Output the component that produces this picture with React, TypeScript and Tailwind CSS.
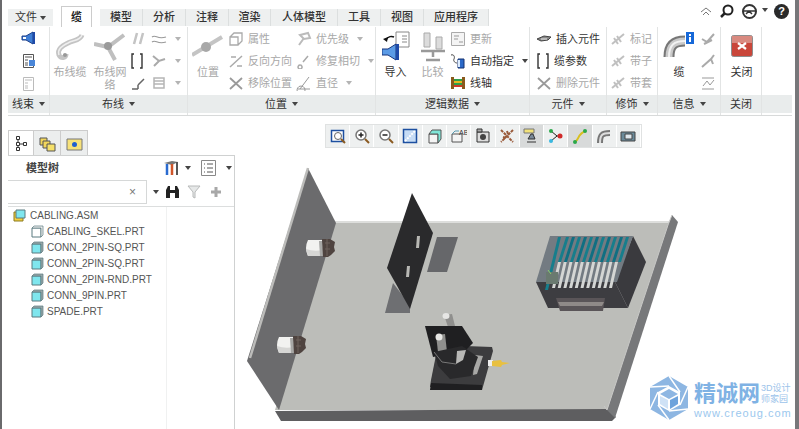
import React from "react";

type P = { className?: string };

const Svg = ({ s = 16, children }: { s?: number; children: React.ReactNode }) => (
  <svg width={s} height={s} viewBox={`0 0 ${s} ${s}`} className="block shrink-0">
    {children}
  </svg>
);

const Caret = ({ className = "" }: P) => <span className={`inline-block w-0 h-0 border-x-[3px] border-x-transparent border-t-[4px] border-t-[#444] ${className}`} />;

// ribbon icons
const Speaker = () => (
  <Svg>
    <path d="M1 6h4l7-4v12l-7-4H1z" fill="#3f7fd6" stroke="#1c3f8a" />
    <path d="M12 2h2v12h-2z" fill="#1f4aa8" />
    <path d="M2 7h3v2H2z" fill="#fff" />
  </Svg>
);
const Sheet = ({ on = true }: { on?: boolean }) => (
  <Svg>
    <path d="M2.500 1.500h10v13h-10z" fill="#fff" stroke={on ? "#555" : "#bbb"} />
    <path d="M4 4h7M4 7h3M4 10h3M4 12h3" stroke={on ? "#555" : "#bbb"} />
    {on && <path d="M8 7h6v6H8z" fill="#4a86d8" />}
  </Svg>
);
const Grey = ({ d, w = 1.5, c = "#b5b5b5" }: { d: string; w?: number; c?: string }) => (
  <Svg>
    <path d={d} fill="none" stroke={c} strokeWidth={w} />
  </Svg>
);
const Cable = () => (
  <svg width="32" height="28" viewBox="0 0 32 28" className="block">
    <path d="M28 2c-2 6-9 5-14 8-6 3-11 6-9 12 2 4 7 3 7-1" fill="none" stroke="#c4c4c4" strokeWidth="5" />
    <path d="M28 2c-2 6-9 5-14 8-6 3-11 6-9 12" fill="none" stroke="#eee" strokeWidth="1.500" />
    <circle cx="11" cy="22" r="2" fill="#999" />
  </svg>
);
const Net = () => (
  <svg width="32" height="28" viewBox="0 0 32 28" className="block">
    <path d="M0 11l14 3 16-12M14 14l7 13" fill="none" stroke="#bfbfbf" strokeWidth="4" />
    <circle cx="14" cy="13" r="4" fill="#9a9a9a" />
  </svg>
);
const Pos = () => (
  <svg width="32" height="24" viewBox="0 0 32 24" className="block">
    <path d="M0 20L30 2" stroke="#c4c4c4" strokeWidth="4" />
    <circle cx="14" cy="12" r="5" fill="#a8a8a8" />
  </svg>
);
const Import = () => (
  <svg width="28" height="32" viewBox="0 0 28 32" className="block">
    <path d="M14 1h13v15H14z" fill="#fff" stroke="#888" />
    <path d="M20 5h5M20 8h5M20 11h5" stroke="#888" />
    <path d="M4 9c2-4 6-4 8-3" fill="none" stroke="#111" strokeWidth="1.500" />
    <path d="M1 8l5-2-1 5z" fill="#111" />
    <path d="M0 18h6l8-5v16l-8-5H0z" fill="#5b9be6" stroke="#17357c" />
    <path d="M14 13h3v16h-3z" fill="#1f4aa8" />
  </svg>
);
const Compare = () => (
  <svg width="28" height="32" viewBox="0 0 28 32" className="block">
    <path d="M5 2h6v14H5zM17 6h6v12h-6z" fill="#dcdcdc" stroke="#aaa" />
    <path d="M2 20h24M14 20v6M7 29h14" stroke="#999" strokeWidth="2.500" />
  </svg>
);
const Update = () => (
  <Svg>
    <path d="M1.500 1.500h13v13h-13z" fill="#f4f4f4" stroke="#aaa" />
    <path d="M4 5h5M4 8h4M9 11h4" stroke="#999" />
  </Svg>
);
const Auto = () => (
  <Svg>
    <path d="M1 2c3-1 4 2 3 4s1 4 3 4" fill="none" stroke="#444" />
    <path d="M8 6h6v9H8z" fill="#2b69c8" stroke="#14306f" />
    <path d="M8 7h2v7H8z" fill="#dcecff" />
  </Svg>
);
const Spool = () => (
  <Svg>
    <path d="M1 2h3v12H1zM12 2h3v12h-3z" fill="#8a5a1c" />
    <path d="M4 4h8v2H4z" fill="#2ea04a" />
    <path d="M4 6h8v2H4z" fill="#e6b820" />
    <path d="M4 8h8v2H4z" fill="#2ea04a" />
    <path d="M4 10h8v2H4z" fill="#d03a2a" />
  </Svg>
);
const Insert = () => (
  <Svg>
    <path d="M1 8l7-3 7 1-3 3-7 1z" fill="#888" stroke="#444" />
    <path d="M5 8h6" stroke="#eee" />
  </Svg>
);
const Brackets = () => (
  <svg width="14" height="16" viewBox="0 0 14 16" className="block">
    <path d="M4 1H2v14h2M10 1h2v14h-2" fill="none" stroke="#333" strokeWidth="1.400" />
  </svg>
);
const Cross = () => <Grey d="M2 3l12 11M14 3L2 14" w={1.800} c="#9a9a9a" />;
const Clamp = () => <Grey d="M2 13L14 3M4 7l4 6M7 5l4 6" w={2} c="#c0c0c0" />;
const Elbow = () => (
  <svg width="32" height="32" viewBox="0 0 32 32" className="block">
    <path d="M6 26c0-12 5-16 16-16" fill="none" stroke="#777" strokeWidth="11" />
    <path d="M6 26c0-12 5-16 16-16" fill="none" stroke="#c9c9c9" strokeWidth="7" />
    <path d="M6 26c0-12 5-16 16-16" fill="none" stroke="#f2f2f2" strokeWidth="2" />
    <path d="M23 1h8v12h-8z" fill="#1668d8" />
    <path d="M26 3h2v2h-2zM26 6h2v5h-2z" fill="#fff" />
  </svg>
);
const CloseX = () => (
  <svg width="22" height="22" viewBox="0 0 22 22" className="block mb-[3px]">
    <rect x=".5" y=".5" width="21" height="21" rx="2" fill="#c9463a" stroke="#8e8e8e" />
    <path d="M1 1h20v7H1z" fill="#d98a80" />
    <path d="M7 8l8 6M15 8l-8 6" stroke="#fff" strokeWidth="2.200" />
  </svg>
);

const Group = ({ w, label, caret = true, children }: { w: string; label: string; caret?: boolean; children: React.ReactNode }) => (
  <div className={`${w} shrink-0 flex flex-col border-r border-[#e2e4e4]`}>
    <div className="h-[68px] flex">{children}</div>
    <div className="h-[18px] bg-[#e9ecec] flex items-center justify-center gap-[5px] text-[11px] text-[#333]">
      {label}
      {caret && <Caret />}
    </div>
  </div>
);

const Big = ({ w, icon, label, off }: { w: string; icon: React.ReactNode; label: React.ReactNode; off?: boolean }) => (
  <div className={`${w} shrink-0 flex flex-col items-center pt-[2px]`}>
    <div className="h-[36px] flex items-center justify-center">{icon}</div>
    <div className={`text-[11px] leading-[13px] text-center mt-[1px] ${off ? "text-[#a8a8a8]" : "text-[#333]"}`}>{label}</div>
  </div>
);

const Col = ({ w, children }: { w: string; children: React.ReactNode }) => <div className={`${w} shrink-0 flex flex-col justify-between pt-[3px] pb-[3px]`}>{children}</div>;

const Row = ({ icon, text, off, caret }: { icon: React.ReactNode; text?: string; off?: boolean; caret?: boolean }) => (
  <div className={`h-[18px] flex items-center gap-[4px] text-[11px] whitespace-nowrap ${off ? "text-[#a8a8a8]" : "text-[#333]"}`}>
    {icon}
    {text}
    {caret && <Caret className={`ml-[4px] ${off ? "opacity-40" : ""}`} />}
  </div>
);

const tabs = [
  { t: "模型", w: "w-[43px]" },
  { t: "分析", w: "w-[43px]" },
  { t: "注释", w: "w-[43px]" },
  { t: "渲染", w: "w-[42px]" },
  { t: "人体模型", w: "w-[67px]" },
  { t: "工具", w: "w-[43px]" },
  { t: "视图", w: "w-[43px]" },
  { t: "应用程序", w: "w-[65px]" },
];

const TopBar = () => (
  <div className="h-[27px] flex items-end pl-[6px]">
    <div className="w-[45px] h-[17px] bg-[#eef0f0] flex items-center justify-center gap-[3px] text-[11px] text-[#333] mb-[1px]">
      文件 <Caret />
    </div>
    <div className="w-[8px] h-[17px] mb-[1px]" />
    <div className="w-[31px] h-[21px] bg-white border border-b-0 border-[#ccc] flex items-center justify-center text-[11px] font-bold text-[#222]">缆</div>
    <div className="w-[8px] h-[17px] mb-[1px]" />
    {tabs.map((x) => (
      <div key={x.t} className={`${x.w} h-[17px] mb-[1px] bg-[#eef0f0] border-r border-[#dcdfdf] flex items-center justify-center text-[11px] font-medium text-[#333]`}>
        {x.t}
      </div>
    ))}
    <div className="ml-auto mr-[6px] mb-[8px] flex items-center gap-[5px]">
      <svg width="12" height="10" viewBox="0 0 12 10" className="block">
        <path d="M1 5l5-4 5 4M3 8l3-3 3 3" fill="none" stroke="#777" />
      </svg>
      <svg width="15" height="15" viewBox="0 0 15 15" className="block ml-[2px]">
        <circle cx="9" cy="6" r="4.500" fill="#fff" stroke="#222" strokeWidth="2" />
        <path d="M6 9l-4 4" stroke="#222" strokeWidth="2.500" />
      </svg>
      <svg width="15" height="15" viewBox="0 0 15 15" className="block ml-[3px]">
        <circle cx="7.500" cy="7.500" r="6.500" fill="#fff" stroke="#333" strokeWidth="2" />
        <path d="M2 7h11M4 10l3-3 3 3" stroke="#333" strokeWidth="1.500" fill="none" />
      </svg>
      <Caret className="mb-[4px]" />
      <div className="ml-[1px] w-[15px] h-[15px] rounded-full bg-[#2a2a2a] text-white text-[11px] font-bold leading-[15px] text-center">?</div>
    </div>
  </div>
);

const Ribbon = () => (
  <div className="h-[89px] ml-[6px] mr-[3px] flex border-b border-[#d8dada] bg-white">
    <Group w="w-[42px]" label="线束">
      <div className="flex-1 flex flex-col items-center justify-between pt-[3px] pb-[3px]">
        <Speaker />
        <Sheet />
        <Sheet on={false} />
      </div>
    </Group>
    <Group w="w-[138px]" label="布线">
      <Big w="w-[40px]" icon={<Cable />} label="布线缆" off />
      <Big w="w-[40px]" icon={<Net />} label={<>布线网<br />络</>} off />
      <Col w="w-[21px]">
        <Row icon={<Grey d="M4 13L7 2M10 13l3-11" w={2.500} c="#c4c4c4" />} />
        <Brackets />
        <Row icon={<Grey d="M2 14h6M8 14V10M14 4l-6 6" w={1.500} c="#666" />} />
      </Col>
      <Col w="w-[30px]">
        <Row icon={<Grey d="M1 6c4-3 5 3 14 0M1 11c4-3 5 3 14 0" w={1.200} c="#999" />} caret off />
        <Row icon={<Grey d="M2 3l6 5 6-2M8 8l-5 5" w={2} c="#aaa" />} caret off />
        <Row icon={<Grey d="M3 3h10v10H3zM3 6h10M3 9h10" w={1.500} c="#b5b5b5" />} caret off />
      </Col>
    </Group>
    <Group w="w-[188px]" label="位置">
      <Big w="w-[40px]" icon={<Pos />} label="位置" off />
      <Col w="w-[68px]">
        <Row icon={<Grey d="M2 6h8v8H2zM2 6l4-4h8v8l-4 4" w={1.300} c="#aaa" />} text="属性" off />
        <Row icon={<Grey d="M2 14L14 3M3 4h5M9 13h5" w={1.500} c="#aaa" />} text="反向方向" off />
        <Row icon={<Cross />} text="移除位置" off />
      </Col>
      <Col w="w-[77px]">
        <Row icon={<Grey d="M3 14L8 7M4 4l8-2 2 5-6 1z" w={2} c="#bbb" />} text="优先级" off caret />
        <Row icon={<Grey d="M4 12a2 2 0 1 0 .1 0M7 9l5-6" w={1.500} c="#aaa" />} text="修复相切" off caret />
        <Row icon={<Grey d="M2 14h12M5 11a4 4 0 1 0 .1 0M4 14L13 2" w={1} c="#999" />} text="直径" off caret />
      </Col>
    </Group>
    <Group w="w-[154px]" label="逻辑数据">
      <Big w="w-[39px]" icon={<Import />} label="导入" />
      <Big w="w-[35px]" icon={<Compare />} label="比较" off />
      <Col w="w-[78px]">
        <Row icon={<Update />} text="更新" off />
        <Row icon={<Auto />} text="自动指定" caret />
        <Row icon={<Spool />} text="线轴" />
      </Col>
    </Group>
    <Group w="w-[77px]" label="元件">
      <Col w="w-[76px] pl-[6px]">
        <Row icon={<Insert />} text="插入元件" />
        <Row icon={<Brackets />} text="缆参数" />
        <Row icon={<Cross />} text="删除元件" off />
      </Col>
    </Group>
    <Group w="w-[51px]" label="修饰">
      <Col w="w-[50px] pl-[3px]">
        <Row icon={<Clamp />} text="标记" off />
        <Row icon={<Clamp />} text="带子" off />
        <Row icon={<Clamp />} text="带套" off />
      </Col>
    </Group>
    <Group w="w-[63px]" label="信息">
      <Big w="w-[42px]" icon={<Elbow />} label="缆" />
      <Col w="w-[20px]">
        <Row icon={<Grey d="M2 8l5 3 7-8M4 13l8-4" w={2} c="#aaa" />} />
        <Row icon={<Grey d="M2 14l9-8 3-4M11 6l2 5" w={2} c="#aaa" />} />
        <Row icon={<Grey d="M2 3h12M2 14h12M3 11l4-5 3 4 4-5" w={1} c="#999" />} />
      </Col>
    </Group>
    <Group w="w-[41px]" label="关闭" caret={false}>
      <Big w="w-[41px]" icon={<CloseX />} label="关闭" />
    </Group>
    <div className="flex-1 flex flex-col">
      <div className="h-[68px]" />
      <div className="h-[18px] bg-[#e9ecec]" />
    </div>
  </div>
);

const Cube = ({ skel }: { skel?: boolean }) => (
  <svg width="13" height="13" viewBox="0 0 13 13" className="block shrink-0">
    <path d="M1 3h9v9H1z" fill={skel ? "#fff" : "#7fe6ee"} stroke="#5a7a80" />
    <path d="M1 3l2-2h9v9l-2 2V3z" fill={skel ? "#eee" : "#9aa8aa"} stroke="#5a7a80" strokeWidth=".7" />
  </svg>
);

const parts = ["CABLING_SKEL.PRT", "CONN_2PIN-SQ.PRT", "CONN_2PIN-SQ.PRT", "CONN_2PIN-RND.PRT", "CONN_9PIN.PRT", "SPADE.PRT"];

const Sidebar = () => (
  <div className="w-[238px] shrink-0 pl-[6px] pr-[5px] pt-[14px] flex flex-col">
    <div className="flex h-[25px]">
      <div className="w-[26px] bg-white border border-b-0 border-[#ccc] flex items-center justify-center">
        <svg width="13" height="17" viewBox="0 0 13 17" className="block">
          <path d="M1.500 1.500h3v3h-3zM1.500 7.500h3v3h-3zM1.500 12.500h3v3h-3zM8.500 7.500h3v3h-3zM3 4.500v3M3 10.500v2M4.500 9h4" fill="none" stroke="#333" />
        </svg>
      </div>
      <div className="w-[27px] bg-[#eceeee] border-t border-r border-[#ccc] flex items-center justify-center">
        <svg width="17" height="17" viewBox="0 0 17 17" className="block">
          <path d="M1 3h7v7H1z" fill="#f2d65a" stroke="#555" />
          <path d="M4 6h7v7H4z" fill="#f2d65a" stroke="#555" />
          <path d="M8 9h8v7H8z" fill="#f5e06a" stroke="#555" />
        </svg>
      </div>
      <div className="w-[27px] bg-[#eceeee] border-t border-r border-[#ccc] flex items-center justify-center">
        <svg width="17" height="15" viewBox="0 0 17 15" className="block">
          <path d="M1 3h15v11H1z" fill="#f7e27a" stroke="#777" />
          <circle cx="8.500" cy="8.500" r="2.500" fill="#1f5fd0" />
        </svg>
      </div>
    </div>
    <div className="flex-1 flex flex-col border-t border-r border-[#cfd1d1]">
      <div className="h-[24px] flex items-center pl-[18px] pr-[2px]">
        <span className="text-[11px] font-bold text-[#444]">模型树</span>
        <div className="ml-auto flex items-center gap-[5px]">
          <svg width="17" height="16" viewBox="0 0 17 16" className="block">
            <path d="M1 3l8-2 6 1-6 3z" fill="#777" />
            <path d="M4 4v11" stroke="#2a6bd0" strokeWidth="2.500" />
            <path d="M9 4v11" stroke="#d0562a" strokeWidth="2.500" />
            <path d="M14 2v13" stroke="#555" strokeWidth="2" />
          </svg>
          <Caret className="mr-[5px]" />
          <svg width="15" height="16" viewBox="0 0 15 16" className="block">
            <path d="M.5.5h14v15H.5z" fill="#fff" stroke="#888" />
            <path d="M3 4h1M6 4h6M3 8h1M6 8h6M3 12h1M6 12h6" stroke="#555" />
          </svg>
          <Caret className="ml-[5px]" />
        </div>
      </div>
      <div className="h-[27px] flex items-start border-b border-[#dcdede]">
        <div className="w-[139px] h-[24px] border border-l-0 border-[#d6d8d8] flex items-center justify-end pr-[10px] text-[12px] text-[#777]">×</div>
        <Caret className="ml-[6px] mt-[10px]" />
        <div className="ml-[6px] mt-[4px] flex items-center gap-[7px]">
          <svg width="15" height="15" viewBox="0 0 15 15" className="block">
            <path d="M1 14V6l2-4h2v12zM10 14V2h2l2 4v8zM5 6h5v3H5z" fill="#222" />
          </svg>
          <svg width="14" height="14" viewBox="0 0 14 14" className="block">
            <path d="M1 1h12L8 7v6L6 12V7z" fill="#e6e8e8" stroke="#b8baba" />
          </svg>
          <svg width="12" height="12" viewBox="0 0 12 12" className="block ml-[2px]">
            <path d="M4.500 1h3v3.500H11v3H7.500V11h-3V7.500H1v-3h3.500z" fill="#a8a8a8" />
          </svg>
        </div>
      </div>
      <div className="flex-1 w-[159px] border-r border-[#f0f1f1] pl-[5px] text-[10px] text-[#555] flex flex-col">
        <div className="h-[16px] flex items-center gap-[4px]">
          <svg width="13" height="13" viewBox="0 0 13 13" className="block shrink-0">
            <path d="M1 3h9v9H1z" fill="#f4d03f" stroke="#8a7a20" />
            <path d="M3 1h9v8H3z" fill="#7fe6ee" stroke="#5a7a80" />
          </svg>
          CABLING.ASM
        </div>
        {parts.map((p, i) => (
          <div key={i} className="h-[16px] flex items-center gap-[3px] pl-[18px]">
            <Cube skel={i === 0} />
            {p}
          </div>
        ))}
      </div>
    </div>
  </div>
);

const tb = [0, 1, 2, 3, 4, 5, 6, 7, 8, 9, 10, 11, 12];

const TbIcon = ({ i }: { i: number }) => {
  const icons: React.ReactNode[] = [
    <><path d="M1.500 2.500h12v11h-12z" fill="#fff" stroke="#1d4fa0" strokeWidth="1.500" /><circle cx="8" cy="8" r="3.500" fill="none" stroke="#666" /><path d="M11 11l4 4" stroke="#8a5a20" strokeWidth="2" /></>,
    <><circle cx="7" cy="7" r="5" fill="#fff" stroke="#777" strokeWidth="1.500" /><path d="M4.500 7h5M7 4.500v5" stroke="#222" strokeWidth="1.500" /><path d="M11 11l4 4" stroke="#8a5a20" strokeWidth="2" /></>,
    <><circle cx="7" cy="7" r="5" fill="#fff" stroke="#777" strokeWidth="1.500" /><path d="M4.500 7h5" stroke="#222" strokeWidth="1.500" /><path d="M11 11l4 4" stroke="#8a5a20" strokeWidth="2" /></>,
    <><path d="M1.500 1.500h13v13h-13z" fill="#c6dcf5" stroke="#1d4fa0" strokeWidth="1.500" /><path d="M3 13L13 3" stroke="#fff" strokeWidth="2" strokeDasharray="2 1" /></>,
    <><path d="M2 6h9v9H2z" fill="#f4f4f4" stroke="#555" /><path d="M2 6l3-4h9v9l-3 4V6z" fill="#7fe6d8" stroke="#555" /></>,
    <><path d="M1 6h10v8H1z" fill="#f4f4f4" stroke="#555" /><path d="M1 6l3-3h4" fill="none" stroke="#5a9bb0" /><text x="8" y="7" fontSize="7" fontFamily="Liberation Sans" fill="#333">AB</text></>,
    <><path d="M2 4h12v10H2z" fill="#ddd" stroke="#333" /><path d="M2 1h5v3H2z" fill="#aaa" stroke="#333" /><circle cx="8" cy="9" r="3" fill="#444" /></>,
    <><path d="M2 2l12 12M14 2L2 14M8 3l1 3M4 9l3 1" stroke="#9a5a3a" strokeWidth="2" strokeDasharray="3 1" fill="none" /></>,
    <><path d="M1 1h10v4H1z" fill="#f2e27a" stroke="#777" /><path d="M8 6l-3 5h7l-2-5zM4 14h9" fill="#7a8a9a" stroke="#333" /></>,
    <><path d="M3 3l6 5M3 13l6-5M9 8h4" stroke="#222" /><circle cx="3" cy="3" r="2" fill="#2aa84a" /><circle cx="3" cy="13" r="2" fill="#38b8e0" /><circle cx="12" cy="8" r="2.500" fill="#d02a2a" /></>,
    <><path d="M2 14c5 0 3-9 12-11" fill="none" stroke="#d8c020" strokeWidth="2" /><circle cx="13" cy="3" r="2" fill="#2aa84a" /><circle cx="3" cy="14" r="2" fill="#2aa84a" /></>,
    <><path d="M4 15c0-8 2-10 10-10" fill="none" stroke="#777" strokeWidth="6" /><path d="M4 15c0-8 2-10 10-10" fill="none" stroke="#ddd" strokeWidth="2" /></>,
    <><path d="M1 4h14v9H1z" fill="#6a8a9a" stroke="#444" /><path d="M5 6h7v5H5z" fill="#dfe8ee" stroke="#444" /></>,
  ];
  return (
    <svg width="16" height="16" viewBox="0 0 16 16" className="block">
      {icons[i]}
    </svg>
  );
};

const Toolbar = () => (
  <div className="absolute left-[85px] top-[8px] w-[317px] h-[24px] bg-[#eef0f0] border border-[#e0e2e2] flex items-center justify-center">
    {tb.map((i) => (
      <div key={i} className={`w-[24.250px] h-[22px] flex items-center justify-center border-r border-white ${i === 8 || i === 10 ? "bg-[#d8dada]" : ""}`}>
        <TbIcon i={i} />
      </div>
    ))}
  </div>
);

const Connector = ({ x, y }: { x: number; y: number }) => (
  <g transform={`translate(${x} ${y})`}>
    <path d="M3 2h14l2 16H3q-4-8 0-16z" fill="#f2f2f0" />
    <path d="M1 11q8 3 17 1v6H3z" fill="#d6d6d4" />
    <path d="M14 3h3l2 15h-4z" fill="#a8a8a6" />
    <path d="M17 1h8l5 3-1 5 1 4-4 4-3 2h-5z" fill="#4f4440" />
    <path d="M20 5h5M20 11h5M22 1v17" stroke="#6f625c" />
  </g>
);

const stripes = [0, 1, 2, 3, 4, 5, 6, 7, 8, 9, 10];

const Model = () => (
  <svg viewBox="240 116 555 313" width="555" height="313" className="block">
    {/* plate */}
    <path d="M335 223H670L607 410H275z" fill="#bcbdb9" />
    <path d="M335 222H670" stroke="#d2d3d0" strokeWidth="1.500" />
    <path d="M275 411L281 421H612L616 417L608 409z" fill="#5e5e60" />
    <path d="M672 215L678 222L615 418L607 410L668 225z" fill="#77787a" />
    <path d="M672 215L668 225L607 410L604 406" fill="none" stroke="#c8c8c6" />
    {/* left wall */}
    <path d="M308 168L336 223L279 410L247 361z" fill="#6b6b6d" />
    <path d="M308 168L250 358" stroke="#bcbcba" strokeWidth="2.500" />
    <Connector x={305} y={238} />
    <Connector x={276} y={335} />
    {/* black plate and shadows */}
    <path d="M437 237H458L447 272H427z" fill="#66676a" />
    <path d="M393 283L410 305V313H385z" fill="#6e6f72" />
    <path d="M412 193L433 233L410 309L387 268z" fill="#2a2a2c" />
    <path d="M417 236h3l-1 12h-3zM407 266h3l-1 11h-3z" fill="#b8b8b4" />
    {/* cable connector */}
    <path d="M438 345L492 347L493 351L482 390L430 387L431 380z" fill="#3c3c3e" />
    <path d="M431 383L482 385V390H430z" fill="#1f1f21" />
    <path d="M475 355L483 356L477 374L473 375z" fill="#a8a8a6" />
    <path d="M444 315L452 314L456 330H449z" fill="#8f8f8d" />
    <ellipse cx="446" cy="316" rx="3.500" ry="3" fill="#e6e6e4" />
    <path d="M425 326H462L473 343L466 350L433 357z" fill="#1f1f21" />
    <path d="M436 335L445 334L447 352H438z" fill="#8f8f8d" />
    <ellipse cx="439" cy="337" rx="3.500" ry="3.500" fill="#e6e6e4" />
    <path d="M434 352L462 346L478 357L471 376L450 379L438 366z" fill="#29292b" />
    <path d="M457 351L466 350L463 360L456 364z" fill="#b8b8b6" />
    <path d="M434 352L442 362L456 364" fill="none" stroke="#777" />
    <path d="M488 360h5v6h-5z" fill="#eee" />
    <path d="M492 361l9-1 1 2 8 1-8 2-1 2-9-1z" fill="#e8c040" />
    {/* module box */}
    <path d="M633 236L646 262L628 308L615 282z" fill="#3a3a3e" />
    <path d="M536 282H615L628 308H548z" fill="#3d3d41" />
    <path d="M550 236H633L617 282H536z" fill="#737b82" />
    <path d="M558 237h3l-13 53h-3z" fill="#167e8c" />
    {stripes.map((i) => (
      <g key={i}>
        <path d={`M${566 + i * 6} 237l-8 25h3l8-25z`} fill={i % 2 ? "#0f6f82" : "#167e8c"} />
        <path d={`M${558 + i * 5.700} 262l-6 26h3l6-26z`} fill="#d4d6d4" />
      </g>
    ))}
    <path d="M546 272h12v12h-12z" fill="#6a7a70" />
    <path d="M548 270l3 4" stroke="#8ad06a" />
    <path d="M556 298H605L603 311H560z" fill="#5a5558" />
    <path d="M558 302H604L602 306H560z" fill="#8f8a88" />
  </svg>
);

const Watermark = () => (
  <div className="absolute left-[409px] top-[260px] flex items-start">
    <svg width="40" height="44" viewBox="0 0 40 44" className="block shrink-0">
      <path d="M20 0L39 11V33L20 44L1 33V11z" fill="#8db6e2" />
      <path d="M20 10L31 16V29L20 35L9 29V16z" fill="#fff" />
      <path d="M20 13L29 18L20 23L11 18z" fill="#8db6e2" />
      <path d="M11 20L19 24V33L11 28z" fill="#cfe2f6" />
      <path d="M29 20L21 24V33L29 28z" fill="#6ea3dc" />
      <path d="M20 0L31 16M39 11L31 29M39 33L20 35M20 44L9 29M1 33L9 16M1 11L20 10" stroke="#fff" strokeWidth="1.500" fill="none" />
    </svg>
    <div className="ml-[5px] mt-[7px] flex flex-col">
      <div className="flex items-center h-[22px]">
        <span className="text-[22px] leading-[22px] font-bold text-[#7fb2e4]">精诚网</span>
        <span className="ml-[1px] text-[9px] leading-[11px] text-[#9cc3ea]">3D设计<br />师家园</span>
      </div>
      <div className="text-[11px] leading-[12px] mt-[2px] text-[#9cc8ee] tracking-[1px]">www.creoug.com</div>
    </div>
  </div>
);

export default function App() {
  return (
    <div className="w-[799px] h-[429px] overflow-hidden bg-white flex font-['Liberation_Sans','Noto_Sans_CJK_SC',sans-serif]">
      <div className="w-[2px] bg-[#6a6a6c] shrink-0" />
      <div className="flex-1 min-w-0 flex flex-col">
        <TopBar />
        <Ribbon />
        <div className="flex-1 flex min-h-0">
          <Sidebar />
          <div className="relative flex-1">
            <Model />
            <Toolbar />
            <Watermark />
          </div>
        </div>
      </div>
      <div className="w-[4px] bg-[#77777a] shrink-0" />
    </div>
  );
}
